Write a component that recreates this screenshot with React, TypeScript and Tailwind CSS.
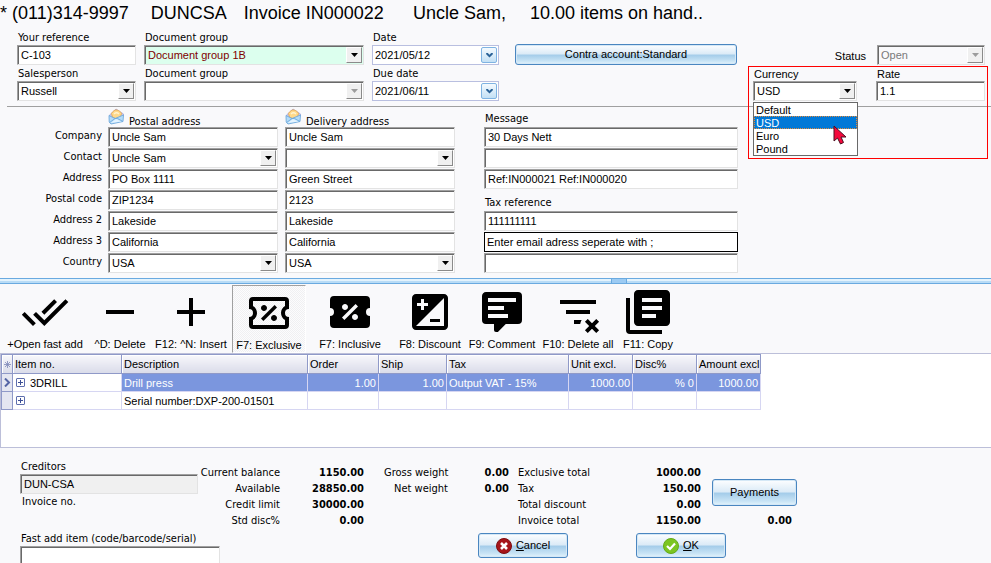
import React, { useId } from "react";
import clsx from "clsx";

const uiFont = "font-['Liberation_Sans',Arial,sans-serif] text-[11px]";
const labelFont = "font-['DejaVu_Sans_Condensed','DejaVu_Sans',Tahoma,sans-serif] text-[11px]";
const sunken =
  "border border-t-[#a0a0a0] border-l-[#a0a0a0] border-r-[#e3e3e3] border-b-[#e3e3e3] shadow-[inset_1px_1px_0_#696969] rounded-none outline-none";
const glossy =
  "rounded-[3px] border border-[#4a86c0] bg-[linear-gradient(to_bottom,#fdfeff_0%,#dcebf7_46%,#a5cdea_54%,#c9e4f5_85%,#e4f4fc_100%)] shadow-[inset_0_0_0_1px_#d5e8f6] text-black";

function Label({ htmlFor, children, className }: { htmlFor?: string; children: React.ReactNode; className?: string }) {
  return (
    <label htmlFor={htmlFor} className={clsx("block h-4 pl-px leading-[18px] whitespace-nowrap", className ?? labelFont)}>
      {children}
    </label>
  );
}

function TextField({ id, value, label, className }: { id?: string; value: string; label?: string; className?: string }) {
  return (
    <input
      id={id}
      aria-label={label}
      defaultValue={value}
      className={clsx("block h-5 w-full min-w-0 pl-[3px] text-black", uiFont, sunken, className ?? "bg-white")}
    />
  );
}

function SelectField({
  id,
  value,
  label,
  disabled,
  grayed,
  className,
}: {
  id?: string;
  value: string;
  label?: string;
  disabled?: boolean;
  grayed?: boolean;
  className?: string;
}) {
  return (
    <div className="relative h-5 w-full">
      <select
        id={id}
        aria-label={label}
        disabled={disabled}
        defaultValue={value}
        className={clsx(
          "block h-5 w-full appearance-none pl-[3px] opacity-100",
          uiFont,
          sunken,
          className ?? (grayed ? "bg-[#f9f9fb] text-[#7a7a7a]" : "bg-white text-black"),
        )}
      >
        <option>{value}</option>
      </select>
      <span className="pointer-events-none absolute top-[2px] right-[2px] flex h-4 w-4 items-center justify-center border border-t-white border-l-white border-r-[#8a8a8a] border-b-[#8a8a8a] bg-[#f0f0f0]">
        <svg width="7" height="4" viewBox="0 0 7 4">
          <path d="M0 0H7L3.5 4Z" fill={disabled ? "#9c9c9c" : "#000"} />
        </svg>
      </span>
    </div>
  );
}

function DateField({ id, value }: { id: string; value: string }) {
  return (
    <div className="flex h-5 w-[127px] items-center border border-[#b9bfe0] bg-white pr-px">
      <input id={id} defaultValue={value} className={clsx("h-4 w-full min-w-0 bg-white pl-[2px] text-black outline-none", uiFont)} />
      <button
        type="button"
        aria-label="Open calendar"
        className="flex h-4 w-4 shrink-0 items-center justify-center rounded-[2px] border border-[#7fb3e2] bg-[linear-gradient(to_bottom,#f4fafe,#c3e0f5)]"
      >
        <svg width="7" height="5" viewBox="0 0 8 6">
          <path d="M0 0H2L4 2L6 0H8V1.5L4 5.5L0 1.5Z" fill="#2c6398" />
        </svg>
      </button>
    </div>
  );
}

function Labelled({
  label,
  labelClass,
  children,
}: {
  label: string;
  labelClass?: string;
  children: (id: string) => React.ReactNode;
}) {
  const id = useId();
  return (
    <div>
      <Label htmlFor={id} className={labelClass}>
        {label}
      </Label>
      {children(id)}
    </div>
  );
}

function Envelope() {
  return (
    <svg width="17" height="17" viewBox="0 0 17 17" className="shrink-0">
      <path d="M1.5 7L8 1L15.5 6V8L8 12L1.5 9Z" fill="#c9c8ea" stroke="#a9a6d6" strokeWidth="0.8" />
      <path d="M3.5 5.5C5 3 7 1.5 9 2C11 2.5 13 4 13.5 5.5L12.5 9L8.5 11L4.5 9Z" fill="#ffd98a" stroke="#e8a84c" strokeWidth="0.8" />
      <path d="M6 6C7.5 4.5 9.5 4.5 11 6" fill="none" stroke="#fff3cf" strokeWidth="1.2" />
      <path d="M1 7.5L7 10.5L15.5 7L15 13.5L3 16L1.2 14Z" fill="#b4dcf8" stroke="#6fa9dc" strokeWidth="0.9" />
      <path d="M1.6 14.5L7 10.5L9.5 10.5L15 13.5" fill="none" stroke="#6fa9dc" strokeWidth="0.9" />
      <path d="M2.5 15L8 11L13.5 13.6Z" fill="#e4f4ff" />
    </svg>
  );
}

const TICKET =
  "M4,4H20A2,2 0 0,1 22,6V10A2,2 0 0,0 20,12A2,2 0 0,0 22,14V18A2,2 0 0,1 20,20H4A2,2 0 0,1 2,18V14A2,2 0 0,0 4,12A2,2 0 0,0 2,10V6A2,2 0 0,1 4,4";
const PERCENT =
  "M14.8,8L16,9.2L9.2,16L8,14.8L14.8,8M9.5,8C10.33,8 11,8.67 11,9.5C11,10.33 10.33,11 9.5,11C8.67,11 8,10.33 8,9.5C8,8.67 8.67,8 9.5,8M14.5,13C15.33,13 16,13.67 16,14.5C16,15.33 15.33,16 14.5,16C13.67,16 13,15.33 13,14.5C13,13.67 13.67,13 14.5,13Z";

const tools = [
  {
    text: "+Open fast add",
    width: "w-[90px]",
    path: "M0.41,13.41L6,19L7.41,17.58L1.83,12M22.24,5.58L11.66,16.17L7.5,12L6.07,13.41L11.66,19L23.66,7M18,7L16.59,5.58L10.24,11.93L11.66,13.34L18,7Z",
  },
  { text: "^D: Delete", width: "w-[60px]", path: "M5,11H19V13H5Z" },
  { text: "F12: ^N: Insert", width: "w-[82px]", path: "M5,11H11V5H13V11H19V13H13V19H11V13H5Z" },
  {
    text: "F7: Exclusive",
    width: "w-[74px]",
    pressed: true,
    path:
      TICKET +
      "M4,6V8.54C5.24,9.26 6,10.57 6,12C6,13.43 5.24,14.75 4,15.46V18H20V15.46C18.76,14.74 18,13.43 18,12C18,10.57 18.76,9.25 20,8.54V6H4" +
      PERCENT,
  },
  { text: "F7: Inclusive", width: "w-[88px]", path: TICKET + PERCENT },
  {
    text: "F8: Discount",
    width: "w-[72px]",
    path: "M19,3H5C3.9,3 3,3.9 3,5V19C3,20.1 3.9,21 5,21H19C20.1,21 21,20.1 21,19V5C21,3.9 20.1,3 19,3ZM5.5,7.5H7.5V5.5H9V7.5H11V9H9V11H7.5V9H5.5ZM19,19H5L19,5ZM17,17V15.5H12V17Z",
  },
  {
    text: "F9: Comment",
    width: "w-[72px]",
    path: "M9,22A1,1 0 0,1 8,21V18H4A2,2 0 0,1 2,16V4C2,2.89 2.9,2 4,2H20A2,2 0 0,1 22,4V16A2,2 0 0,1 20,18H13.9L10.2,21.71C10,21.9 9.75,22 9.5,22H9M5,5V7H19V5H5M5,9V11H13V9H5M5,13V15H15V13H5Z",
  },
  {
    text: "F10: Delete all",
    width: "w-[80px]",
    path: "M21 8H3V6H21V8M13.81 16H10V18H13.09C13.21 17.28 13.46 16.61 13.81 16M18 11H6V13H18V11M21.12 15.46L19 17.59L16.88 15.46L15.47 16.88L17.59 19L15.47 21.12L16.88 22.54L19 20.41L21.12 22.54L22.54 21.12L20.41 19L22.54 16.88L21.12 15.46Z",
  },
  {
    text: "F11: Copy",
    width: "w-[60px]",
    path: "M21,1H7C5.89,1 5,1.89 5,3V17C5,18.11 5.9,19 7,19H21C22.11,19 23,18.11 23,17V3C23,1.89 22.1,1 21,1M19,7H9V5H19M19,11H9V9H19M16,15H9V13H16M1,5H3V21H19V23H3A2,2 0 0,1 1,21Z",
  },
];

function Toolbar() {
  return (
    <div role="toolbar" className="flex h-[69px] pt-px">
      {tools.map((t) => (
        <button
          key={t.text}
          type="button"
          aria-pressed={t.pressed}
          className={clsx(
            "flex shrink-0 flex-col items-center border whitespace-nowrap",
            uiFont,
            t.width,
            t.pressed
              ? "border-t-[#a0a0a0] border-r-white border-b-white border-l-[#a0a0a0] bg-[repeating-conic-gradient(#f0f0f2_0%_25%,#fcfcfd_0%_50%)] bg-[length:2px_2px] pt-[3px]"
              : "border-transparent pt-[2px]",
          )}
        >
          <svg width="48" height="48" viewBox="0 0 24 24" className="shrink-0">
            <path d={t.path} fill="#000" fillRule="evenodd" />
          </svg>
          <span className="leading-4">{t.text}</span>
        </button>
      ))}
    </div>
  );
}

const columns = [
  { title: "Item no.", width: "w-[109px]" },
  { title: "Description", width: "w-[186px]" },
  { title: "Order", width: "w-[71px]" },
  { title: "Ship", width: "w-[68px]" },
  { title: "Tax", width: "w-[122px]" },
  { title: "Unit excl.", width: "w-[64px]" },
  { title: "Disc%", width: "w-[64px]" },
  { title: "Amount excl", width: "w-[64px]" },
];

function Expander({ label }: { label: string }) {
  return (
    <button type="button" aria-label={label} className="flex h-[9px] w-[9px] shrink-0 items-center justify-center rounded-[1px] border border-[#5f6fae] bg-white">
      <svg width="5" height="5" viewBox="0 0 5 5">
        <path d="M2 0H3V2H5V3H3V5H2V3H0V2H2Z" fill="#3d4f95" />
      </svg>
    </button>
  );
}

const headCell =
  "h-[19px] border border-[#8f99c8] bg-[linear-gradient(to_bottom,#f7f7fb,#d9dbe9)] p-0 pl-[2px] text-left font-normal shadow-[inset_1px_1px_0_#fff]";
const bodyCell = "h-[18px] border border-[#d6d6f2] p-0 px-[2px]";

function ItemsGrid() {
  const values = ["1.00", "1.00", "Output VAT - 15%", "1000.00", "% 0", "1000.00"];
  return (
    <div className="h-[95px] border border-r-0 border-[#bcbfd9] bg-white">
      <table className={clsx("w-[759px] table-fixed border-collapse leading-4 whitespace-nowrap text-black", uiFont)}>
        <thead>
          <tr>
            <th className={clsx("w-[11px]", headCell)} aria-label="Row marker">
              <svg width="7" height="7" viewBox="0 0 7 7">
                <path d="M3.5 0V7M0 3.5H7M1 1L6 6M6 1L1 6" stroke="#7d88b8" strokeWidth="0.8" />
              </svg>
            </th>
            {columns.map((c) => (
              <th key={c.title} className={clsx(headCell, c.width)}>
                {c.title}
              </th>
            ))}
          </tr>
        </thead>
        <tbody>
          <tr>
            <td className="h-[18px] border border-[#8f99c8] bg-[#e4e6f1] p-0 pl-px">
              <svg width="8" height="9" viewBox="0 0 8 9">
                <path d="M2 0.5L6 4.5L2 8.5" fill="none" stroke="#5565a5" strokeWidth="2" />
              </svg>
            </td>
            <td className={bodyCell}>
              <div className="flex items-center gap-[5px] pl-px">
                <Expander label="Expand 3DRILL" />
                <span>3DRILL</span>
              </div>
            </td>
            <td className={clsx(bodyCell, "bg-[#7b96de] text-white")}>Drill press</td>
            {values.map((v, i) => (
              <td key={i} className={clsx(bodyCell, "bg-[#7b96de] text-white", i !== 2 && "text-right")}>
                {v}
              </td>
            ))}
          </tr>
          <tr>
            <td className="h-[18px] border border-[#8f99c8] bg-[#e4e6f1] p-0" />
            <td className={bodyCell}>
              <div className="flex items-center pl-px">
                <Expander label="Expand serial" />
              </div>
            </td>
            <td className={bodyCell}>Serial number:DXP-200-01501</td>
            {values.map((_, i) => (
              <td key={i} className={bodyCell} />
            ))}
          </tr>
        </tbody>
      </table>
    </div>
  );
}

const addressLabels = ["Company", "Contact", "Address", "Postal code", "Address 2", "Address 3", "Country"];
const postal = ["Uncle Sam", "Uncle Sam", "PO Box 1111", "ZIP1234", "Lakeside", "California", "USA"];
const delivery = ["Uncle Sam", "", "Green Street", "2123", "Lakeside", "California", "USA"];

function AddressColumn({ title, values, className }: { title: string; values: string[]; className: string }) {
  return (
    <div className={clsx("flex w-[170px] flex-col gap-px", className)}>
      <div className={clsx("flex h-[19px] items-center gap-1", labelFont)}>
        <Envelope />
        <span className="pt-[10px] leading-4">{title}</span>
      </div>
      {values.map((v, i) =>
        i === 1 || i === 6 ? (
          <SelectField key={i} value={v} label={title + " " + addressLabels[i]} />
        ) : (
          <TextField key={i} value={v} label={title + " " + addressLabels[i]} />
        ),
      )}
    </div>
  );
}

function Totals({ rows, className, alignRight }: { rows: [string, string][]; className: string; alignRight?: boolean }) {
  return (
    <dl className={clsx("grid content-start leading-4 whitespace-nowrap", labelFont, className)}>
      {rows.map(([k, v]) => (
        <React.Fragment key={k}>
          <dt className={alignRight ? "text-right" : undefined}>{k}</dt>
          <dd className="text-right font-bold">{v}</dd>
        </React.Fragment>
      ))}
    </dl>
  );
}

const currencies = ["Default", "USD", "Euro", "Pound"];

export default function App() {
  return (
    <main className={clsx("h-screen overflow-hidden bg-[#f9f9fb] text-black", uiFont)}>
      <h1 className="flex h-[29px] text-[18px] leading-[27px] font-normal whitespace-nowrap">
        <span>* (011)314-9997</span>
        <span className="ml-[22px]">DUNCSA</span>
        <span className="ml-[17px]">Invoice IN000022</span>
        <span className="ml-[29px]">Uncle Sam,</span>
        <span className="ml-6">10.00 items on hand..</span>
      </h1>

      <section className="relative ml-[7px] flex h-[78px] border-b border-[#a0a0a0] pl-[10px]">
        <div className="w-[119px]">
          <Labelled label="Your reference">{(id) => <TextField id={id} value="C-103" />}</Labelled>
          <Labelled label="Salesperson">{(id) => <SelectField id={id} value="Russell" />}</Labelled>
        </div>
        <div className="ml-2 w-[220px]">
          <Labelled label="Document group">
            {(id) => <SelectField id={id} value="Document group 1B" className="bg-[#dcffee] text-[#800000]" />}
          </Labelled>
          <Labelled label="Document group">{(id) => <SelectField id={id} value="" disabled />}</Labelled>
        </div>
        <div className="ml-2">
          <Labelled label="Date">{(id) => <DateField id={id} value="2021/05/12" />}</Labelled>
          <Labelled label="Due date">{(id) => <DateField id={id} value="2021/06/11" />}</Labelled>
        </div>
        <button type="button" className={clsx("mt-[15px] ml-4 h-[21px] w-[222px]", uiFont, glossy)}>
          Contra account:Standard
        </button>

        <div className="mr-[6px] ml-auto w-[232px]">
          <div className="flex items-center justify-end gap-[11px] pt-4">
            <Label htmlFor="status" className={uiFont}>
              Status
            </Label>
            <div className="w-[108px]">
              <SelectField id="status" value="Open" disabled grayed />
            </div>
          </div>
          <div className="relative flex justify-between">
            <div className="relative w-[104px]">
              <Labelled label="Currency" labelClass={uiFont}>
                {(id) => <SelectField id={id} value="USD" />}
              </Labelled>
              <ul
                role="listbox"
                aria-label="Currency options"
                className="absolute top-[37px] left-0 z-20 w-[105px] border border-[#696969] bg-white leading-[14px]"
              >
                {currencies.map((c) => (
                  <li
                    key={c}
                    role="option"
                    aria-selected={c === "USD"}
                    className={clsx(
                      "h-[13px] pl-[2px]",
                      c === "USD" && "bg-[#0078d7] text-white outline-1 -outline-offset-1 outline-dotted outline-[#e08a3c]",
                    )}
                  >
                    {c}
                  </li>
                ))}
              </ul>
              <svg className="absolute top-[60px] left-[80px] z-30" width="15" height="21" viewBox="0 0 15 21">
                <path d="M1 1V16L4.5 13L7.5 19L10.5 17.5L8 12H13Z" fill="#f5083c" stroke="#4a1020" strokeWidth="1" />
              </svg>
            </div>
            <div className="w-[109px]">
              <Labelled label="Rate" labelClass={uiFont}>
                {(id) => <TextField id={id} value="1.1" />}
              </Labelled>
            </div>
            <div className="pointer-events-none absolute top-px -right-[3px] -left-[5px] z-10 h-[93px] border border-[#ff0000]" />
          </div>
        </div>
      </section>

      <section className="flex pb-[5px]">
        <div className={clsx("flex w-[102px] flex-col gap-px pt-[19px] text-right", labelFont)}>
          {addressLabels.map((l) => (
            <span key={l} className="h-5 leading-5">
              {l}
            </span>
          ))}
        </div>
        <AddressColumn title="Postal address" values={postal} className="ml-[6px]" />
        <AddressColumn title="Delivery address" values={delivery} className="ml-[7px]" />
        <div className="ml-[29px] flex w-[254px] flex-col gap-px">
          <div className="flex h-[19px] items-end">
            <Label htmlFor="message">Message</Label>
          </div>
          <TextField id="message" value="30 Days Nett" />
          <TextField label="Message line 2" value="" />
          <TextField label="Message line 3" value="Ref:IN000021 Ref:IN000020" />
          <div className="flex h-5 items-end">
            <Label htmlFor="taxref">Tax reference</Label>
          </div>
          <TextField id="taxref" value="111111111" />
          <input
            aria-label="Email addresses"
            defaultValue="Enter email adress seperate with ;"
            className={clsx("block h-5 w-full border border-black bg-white pl-[2px] outline-none", uiFont)}
          />
          <TextField label="Extra reference" value="" />
        </div>
      </section>

      <div
        role="separator"
        className="flex h-[6px] justify-center border-y border-[#6aaae0] bg-[linear-gradient(to_bottom,#e3f3fd_0%,#e3f3fd_50%,#b9dcf6_50%,#b9dcf6_100%)] pl-[247px]"
      >
        <span className="w-4 border-x border-[#6aaae0] bg-[#9ccbf3]" />
      </div>

      <Toolbar />
      <ItemsGrid />

      <section className="flex pl-5">
        <div className="w-[200px] shrink-0 pt-[10px]">
          <Label htmlFor="creditors">Creditors</Label>
          <div className="w-[178px]">
            <TextField id="creditors" value="DUN-CSA" className="bg-[#f0f0f0]" />
          </div>
          <p className={clsx("pl-[2px] leading-4", labelFont)}>Invoice no.</p>
          <div className="pt-5">
            <Label htmlFor="fastadd">Fast add item (code/barcode/serial)</Label>
            <TextField id="fastadd" value="" />
          </div>
        </div>

        <div className="-ml-5 pt-[17px]">
          <div className="flex h-[68px]">
            <Totals
              alignRight
              className="grid-cols-[80px_84px]"
              rows={[
                ["Current balance", "1150.00"],
                ["Available", "28850.00"],
                ["Credit limit", "30000.00"],
                ["Std disc%", "0.00"],
              ]}
            />
            <Totals
              alignRight
              className="grid-cols-[64px_61px] pl-5"
              rows={[
                ["Gross weight", "0.00"],
                ["Net weight", "0.00"],
              ]}
            />
            <Totals
              className="ml-[9px] grid-cols-[100px_83px]"
              rows={[
                ["Exclusive total", "1000.00"],
                ["Tax", "150.00"],
                ["Total discount", "0.00"],
                ["Invoice total", "1150.00"],
              ]}
            />
            <div className="ml-[11px] w-[85px] pt-[14px]">
              <button type="button" className={clsx("block h-[27px] w-full", uiFont, glossy)}>
                Payments
              </button>
              <p className={clsx("pt-[7px] pr-[5px] text-right leading-4 font-bold", labelFont)}>0.00</p>
            </div>
          </div>
          <div className="flex gap-[68px] pl-[278px]">
            <button type="button" className={clsx("flex h-[25px] w-[90px] items-center justify-center gap-1", uiFont, glossy)}>
              <svg width="16" height="16" viewBox="0 0 16 16">
                <circle cx="8" cy="8" r="7.5" fill="#a61419" stroke="#7c0d10" />
                <path d="M5 5L11 11M11 5L5 11" stroke="#fff" strokeWidth="2.6" />
              </svg>
              <span>
                <u>C</u>ancel
              </span>
            </button>
            <button type="button" className={clsx("flex h-[25px] w-[90px] items-center justify-center gap-1", uiFont, glossy)}>
              <svg width="16" height="16" viewBox="0 0 16 16">
                <circle cx="8" cy="8" r="7.5" fill="#7cc521" stroke="#64ab18" />
                <path d="M4 8L7 11L12 5.5" fill="none" stroke="#fff" strokeWidth="2.2" />
              </svg>
              <span>
                <u>O</u>K
              </span>
            </button>
          </div>
        </div>
      </section>
    </main>
  );
}
